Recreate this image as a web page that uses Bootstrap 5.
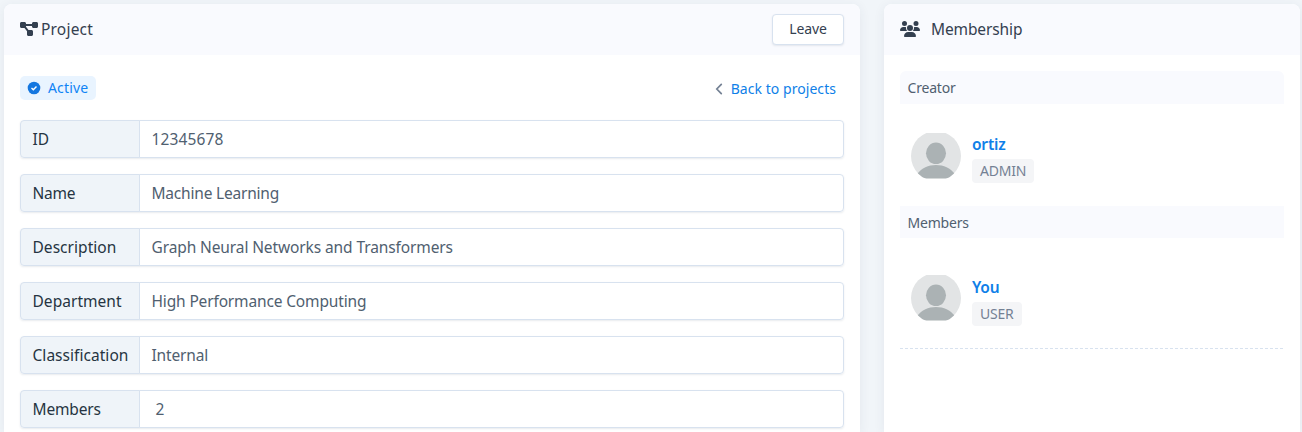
<!DOCTYPE html>
<html lang="en">
<head>
<meta charset="utf-8">
<meta name="viewport" content="width=device-width, initial-scale=1">
<title>Project</title>
<link href="https://cdn.jsdelivr.net/npm/bootstrap@5.3.0/dist/css/bootstrap.min.css" rel="stylesheet">
<style>
body{background:#f1f5f9;font-family:"Noto Sans","Open Sans",sans-serif;font-size:15.5px;letter-spacing:-.2px;color:#506070;line-height:24px}
.page{padding:4px 2px 0 4px;gap:24px}
.panel{background:#fff;border:0;border-radius:8px 8px 0 0;box-shadow:0 2px 12px rgba(40,60,90,.07);height:428px}
.main-panel{width:856px}
.side-panel{width:416px}
.panel-head{height:51px;background:#f9fafe;border-radius:8px 8px 0 0;padding:0 16px 2px 15.5px;color:#344050}
.panel-head svg{fill:#344050}
.btn-leave{width:72px;height:31px;padding:0 0 2px;line-height:26px;font-size:14px;letter-spacing:-.1px;background:#fff;border:1px solid #d8e2ef;border-radius:4px;color:#344050;box-shadow:0 1px 2px rgba(40,60,90,.1);margin-top:2px}
.title-project{letter-spacing:.2px}
.title-member{letter-spacing:-.12px}
.status{height:24px;padding:0 8px 0 7px;gap:7px;border-radius:5px;background:#e9f4ff;color:#0f83f5;font-size:14px;letter-spacing:.15px}
.back{font-size:14px;color:#0f7fe8;text-decoration:none;gap:8px;letter-spacing:.05px;padding-top:2px}
.fields{gap:16px}
.field{height:38px;border-radius:4px;box-shadow:0 1px 2px rgba(40,60,90,.1)}
.field>span{border:1px solid #d8e2ef;font-size:15.5px}
.field .key{width:120px;padding-left:11.5px;background:#eff4f9;color:#263442;border-radius:4px 0 0 4px;white-space:nowrap;letter-spacing:.04px}
.field .val{margin-left:-1px;border-radius:0 4px 4px 0;padding-left:11.5px;letter-spacing:-.15px}
.section{background:#f9fafe;padding:0 8px 0 7.5px;font-size:14px;height:33px}
.section-members{height:32px;padding-top:1px}
.person{padding-left:11px;gap:11px}
.avatar{width:50px;height:46px;clip-path:circle(25px at 50% 50%)}
.who{font-weight:600;color:#0f7fe8;text-decoration:none;line-height:24px}
.role{background:#f4f5f7;color:#748194;border-radius:4px;height:24px;padding:0 8px;font-size:14px;margin-top:3px}
.divider{height:1px;background:repeating-linear-gradient(90deg,#d8e2ef 0 3px,transparent 3px 5px)}
</style>
</head>
<body>
<svg class="d-none"><defs>
<symbol id="avatar" viewBox="0 0 50 46"><rect width="50" height="46" fill="#e2e4e5"/><ellipse cx="25" cy="20.3" rx="10" ry="10.8" fill="#abb2b4"/><path d="M6 41C11 35 17 32 25 32s14 3 19 9v4.3H6z" fill="#abb2b4"/></symbol>
</defs></svg>
<main class="page d-flex">
<section class="card panel main-panel">
<header class="panel-head d-flex align-items-center justify-content-between">
<div class="d-flex align-items-center"><svg width="18" height="16" viewBox="0 0 576 512" style="margin-right:3.5px"><path d="M0 80C0 53.5 21.5 32 48 32h96c26.5 0 48 21.5 48 48V96H384V80c0-26.5 21.5-48 48-48h96c26.5 0 48 21.5 48 48v96c0 26.5-21.5 48-48 48H432c-26.5 0-48-21.5-48-48V160H192v16c0 1.7-.1 3.4-.3 5L272 288h96c26.5 0 48 21.5 48 48v96c0 26.5-21.5 48-48 48H272c-26.5 0-48-21.5-48-48V336c0-1.7 .1-3.4 .3-5L144 224H48c-26.5 0-48-21.5-48-48V80z"/></svg><span class="title-project">Project</span></div>
<button type="button" class="btn btn-leave">Leave</button>
</header>
<div class="px-3" style="padding-top:21px">
<div class="d-flex align-items-center justify-content-between" style="height:24px;margin-bottom:20px">
<span class="status d-inline-flex align-items-center"><svg width="14" height="14" viewBox="0 0 14 14"><circle cx="7" cy="7" r="6.3" fill="#1477e0"/><path d="M4.5 7.1l1.8 1.7 3.2-3.3" fill="none" stroke="#fff" stroke-width="1.4"/></svg><span>Active</span></span>
<a href="#" class="back d-inline-flex align-items-center me-2"><svg width="8" height="12" viewBox="0 0 8 12"><path d="M6.3 1.3L1.8 6l4.5 4.7" fill="none" stroke="#748194" stroke-width="1.7" stroke-linecap="round"/></svg><span>Back to projects</span></a>
</div>
<div class="fields d-flex flex-column">
<div class="field d-flex"><span class="key d-flex align-items-center">ID</span><span class="val flex-fill d-flex align-items-center" style="letter-spacing:.15px">12345678</span></div>
<div class="field d-flex"><span class="key d-flex align-items-center" style="letter-spacing:-.2px">Name</span><span class="val flex-fill d-flex align-items-center" style="letter-spacing:-.2px">Machine Learning</span></div>
<div class="field d-flex"><span class="key d-flex align-items-center">Description</span><span class="val flex-fill d-flex align-items-center" style="letter-spacing:-.11px">Graph Neural Networks and Transformers</span></div>
<div class="field d-flex"><span class="key d-flex align-items-center">Department</span><span class="val flex-fill d-flex align-items-center">High Performance Computing</span></div>
<div class="field d-flex"><span class="key d-flex align-items-center">Classification</span><span class="val flex-fill d-flex align-items-center">Internal</span></div>
<div class="field d-flex"><span class="key d-flex align-items-center" style="letter-spacing:-.15px">Members</span><span class="val flex-fill d-flex align-items-center" style="padding-left:15.5px">2</span></div>
</div>
</div>
</section>
<aside class="card panel side-panel">
<header class="panel-head d-flex align-items-center"><svg width="20" height="16" viewBox="0 0 640 512" style="margin-right:11.5px"><path d="M144 0a80 80 0 1 1 0 160A80 80 0 1 1 144 0zM512 0a80 80 0 1 1 0 160A80 80 0 1 1 512 0zM0 298.7C0 239.8 47.8 192 106.7 192h42.7c15.9 0 31 3.5 44.6 9.7c-1.3 7.2-1.9 14.7-1.9 22.3c0 38.2 16.8 72.5 43.3 96c-.2 0-.4 0-.7 0H21.3C9.6 320 0 310.4 0 298.7zM405.3 320c-.2 0-.4 0-.7 0c26.6-23.5 43.3-57.8 43.3-96c0-7.6-.7-15-1.9-22.3c13.6-6.3 28.7-9.7 44.6-9.7h42.7C592.2 192 640 239.8 640 298.7c0 11.8-9.6 21.3-21.3 21.3H405.3zM224 224a96 96 0 1 1 192 0 96 96 0 1 1 -192 0zM128 485.3C128 411.7 187.7 352 261.3 352H378.7C452.3 352 512 411.7 512 485.3c0 14.7-11.9 26.7-26.7 26.7H154.7c-14.7 0-26.7-11.9-26.7-26.7z"/></svg><span class="title-member">Membership</span></header>
<div class="p-3 pb-0">
<div class="section rounded-top d-flex align-items-center">Creator</div>
<div class="person d-flex" style="padding-top:29px;height:102px"><svg class="avatar"><use href="#avatar" width="50" height="46"/></svg><div class="d-flex flex-column align-items-start" style="margin-top:-1px"><a href="#" class="who">ortiz</a><span class="role d-flex align-items-center">ADMIN</span></div></div>
<div class="section section-members d-flex align-items-center">Members</div>
<div class="person d-flex" style="padding-top:37px;height:110px"><svg class="avatar"><use href="#avatar" width="50" height="46"/></svg><div class="d-flex flex-column align-items-start"><a href="#" class="who">You</a><span class="role d-flex align-items-center">USER</span></div></div>
<div class="divider"></div>
</div>
</aside>
</main>
<script src="https://cdn.jsdelivr.net/npm/bootstrap@5.3.0/dist/js/bootstrap.bundle.min.js"></script>
</body>
</html>
